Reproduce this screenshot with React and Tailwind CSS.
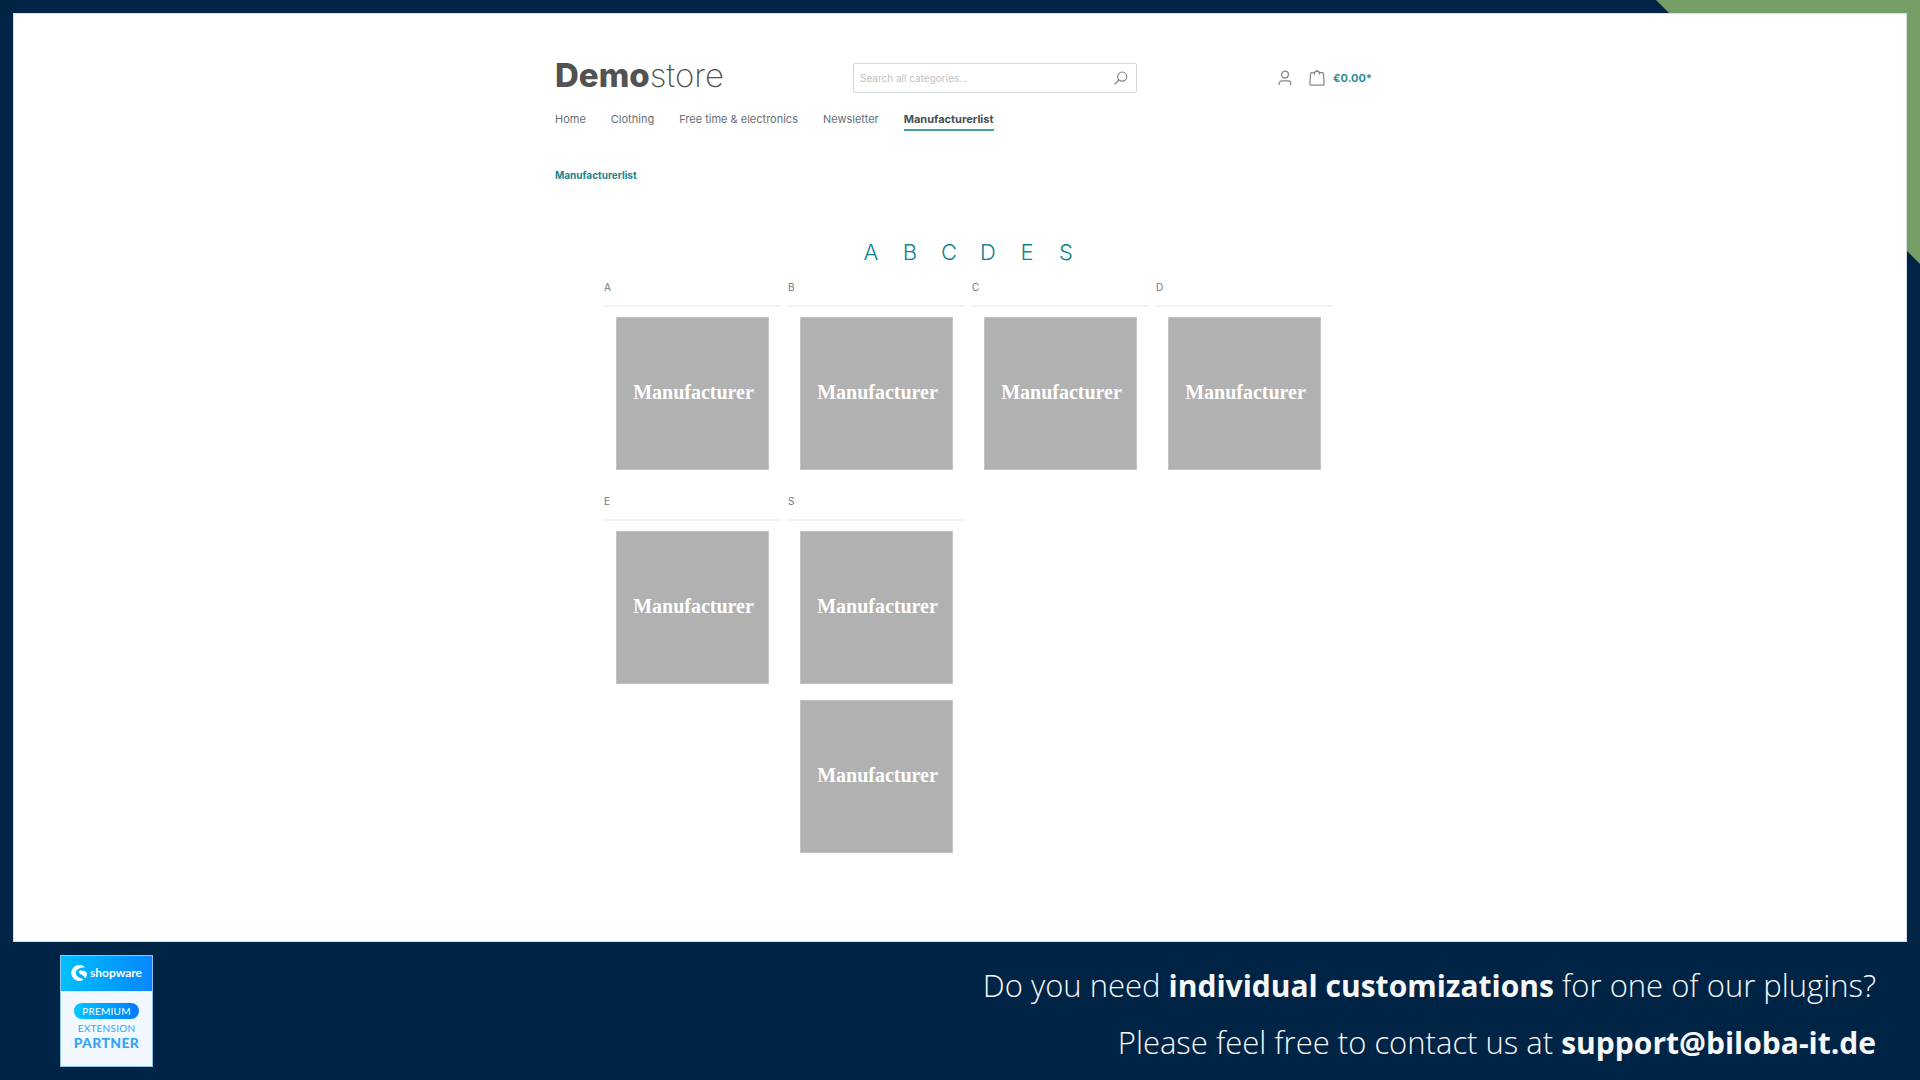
const navItems = ["Home", "Clothing", "Free time & electronics", "Newsletter", "Manufacturerlist"];

const groups = [
  { letter: "A", count: 1 },
  { letter: "B", count: 1 },
  { letter: "C", count: 1 },
  { letter: "D", count: 1 },
  { letter: "E", count: 1 },
  { letter: "S", count: 2 },
];

function SearchIcon() {
  return (
    <svg viewBox="0 0 14 14" className="size-[14px]" fill="none" stroke="#848484" strokeWidth="1.2" strokeLinecap="round" aria-hidden="true">
      <circle cx="8.2" cy="5.6" r="4.6" />
      <path d="M4.9 9 1 13" />
    </svg>
  );
}

function UserIcon() {
  return (
    <svg viewBox="0 0 14 16" className="h-4 w-[14px]" fill="none" stroke="#8a8a8a" strokeWidth="1.3" strokeLinecap="round" aria-hidden="true">
      <circle cx="7" cy="4.6" r="3.4" />
      <path d="M1.2 14.6v-1.1a2.7 2.7 0 0 1 2.7-2.7h6.2a2.7 2.7 0 0 1 2.7 2.7v1.1" />
    </svg>
  );
}

function BagIcon() {
  return (
    <svg viewBox="0 0 16 16" className="size-4" fill="none" stroke="#8a8a8a" strokeWidth="1.3" strokeLinecap="round" strokeLinejoin="round" aria-hidden="true">
      <path d="M5.4 2.6H2.6a1 1 0 0 0-1 .9L.9 13.800a1.300 1.300 0 0 0 1.300 1.400h11.600a1.300 1.300 0 0 0 1.300-1.400l-.7-10.300a1 1 0 0 0-1-.9h-2.800" />
      <path d="M5.400 4.200V3a2.400 2.200 0 0 1 4.200-1.300" />
      <path d="M6.400 1.700a2.600 2.200 0 0 1 4.200 1.300v1.200" />
    </svg>
  );
}

function Header() {
  return (
    <header>
      <div className="grid grid-cols-[298px_284px_1fr] items-center">
        <a href="#" className="-mt-1.5 text-[33px] leading-[30px] text-[#525252]">
          <span className="font-extrabold">Demo</span>
          <span className="font-extralight">store</span>
        </a>
        <form className="flex h-[30px] items-center rounded-xs border border-[#d3d7da] pr-2 pl-1.5">
          <input
            type="search"
            aria-label="Search all categories"
            placeholder="Search all categories..."
            className="min-w-0 flex-1 text-[10px] text-[#4a545b] outline-none placeholder:text-[#bfc1c3]"
          />
          <button type="button" aria-label="Search">
            <SearchIcon />
          </button>
        </form>
        <div className="flex items-center justify-end gap-[17px] pr-px">
          <button type="button" aria-label="Your account">
            <UserIcon />
          </button>
          <button type="button" className="flex items-center gap-2 text-[11px] leading-4 font-bold text-[#2b8f9b]">
            <BagIcon />
            <span>€0.00*</span>
          </button>
        </div>
      </div>
      <nav className="mt-[18px] flex gap-[25px] text-[11px] leading-4">
        {navItems.map((item) =>
          item === "Manufacturerlist" ? (
            <a key={item} href="#" aria-current="page" className="border-b-2 border-[#3e9fac] pb-0.5 font-bold text-[#4a4f54]">
              {item}
            </a>
          ) : (
            <a key={item} href="#" className="text-[#686e74]">
              {item}
            </a>
          ),
        )}
      </nav>
    </header>
  );
}

function ManufacturerGroup({ letter, count }) {
  return (
    <section id={letter}>
      <h2 className="border-b-2 border-[#f3f3f3] pb-2 text-[10px] leading-5 text-[#70767b]">{letter}</h2>
      <div className="mt-2.5 grid gap-4 px-3">
        {Array.from({ length: count }, (_, i) => (
          <a
            key={i}
            href="#"
            className="flex aspect-square items-center justify-center border border-[#c4c4c4] bg-[#b1b1b1] pb-1 pl-0.5 font-['Liberation_Serif',serif] text-[20px] leading-6 font-bold text-white"
          >
            Manufacturer
          </a>
        ))}
      </div>
    </section>
  );
}

function PartnerBadge() {
  return (
    <div className="flex h-28 w-[93px] flex-col border border-[#8fc4ea] bg-[#f2f8ff] text-center font-['Lato',sans-serif]">
      <div className="flex h-[35px] items-center justify-center gap-[3px] bg-linear-to-r from-[#00bfff] to-[#0d86ff] pb-0.5 text-white">
        <svg viewBox="0 0 16 16" className="size-4" fill="white" aria-hidden="true">
          <path d="M13.300 1.700A8 8 0 1 0 12 15c.4-.2.4-.6 0-.8C9.500 13 5.200 12.200 4.800 8.300 4.500 4.600 8.500 2.500 13.200 2.500c.5 0 .5-.5.1-.8z" />
          <path d="M8.400 5.800c2.500-1 6.800.8 7.500 2.200.3 1.800-.3 3.300-1 4.600-.3.500-.8.500-1.100.1C12.300 9.500 8.300 9.600 7.800 7.300c-.1-.7.100-1.200.6-1.500z" />
        </svg>
        <span className="text-[12px] leading-4 font-bold">shopware</span>
      </div>
      <div className="mt-3 flex flex-col items-center">
        <span className="rounded-full bg-linear-to-r from-[#00c8ff] to-[#0a78ff] px-2 text-[10px] leading-4 tracking-wide text-white">PREMIUM</span>
        <span className="text-[10px] leading-[18px] tracking-wide text-[#35a4f5]">EXTENSION</span>
        <span className="text-[14px] leading-3 font-black tracking-wide text-[#35a4f5]">PARTNER</span>
      </div>
    </div>
  );
}

export default function App() {
  return (
    <div className="relative isolate flex min-h-screen flex-col bg-[#002446] font-['Inter',sans-serif]">
      <div className="absolute top-0 right-0 -z-10 size-[264px] bg-[#759e66] [clip-path:polygon(0_0,100%_0,100%_100%)]" />
      <main className="mx-[13px] mt-[13px] flex-1 border border-[#d5dde2] bg-white pt-[49px]">
        <div className="mx-auto max-w-[826px] pl-2">
          <Header />
          <a href="#" className="mt-9 block w-fit text-[10px] leading-4 font-bold text-[#22838f]">
            Manufacturerlist
          </a>
          <div className="mt-[53px] pr-10 pl-[49px]">
            <nav aria-label="Manufacturers by letter" className="flex justify-center text-[22px] leading-8 font-light text-[#0f8490]">
              {groups.map(({ letter }) => (
                <a key={letter} href={"#" + letter} className="w-[39px] text-center">
                  {letter}
                </a>
              ))}
            </nav>
            <div className="mt-[9px] grid grid-cols-4 gap-x-[7px] gap-y-[21px]">
              {groups.map((group) => (
                <ManufacturerGroup key={group.letter} {...group} />
              ))}
            </div>
          </div>
        </div>
      </main>
      <footer className="flex h-[138px] items-center justify-between pr-11 pl-[60px]">
        <PartnerBadge />
        <div className="pt-1.5 text-right font-['Open_Sans',sans-serif] text-[31px] leading-[57px] font-light text-[#f7f7f7]">
          <p>
            Do you need <strong className="text-[30px] font-bold">individual customizations</strong> for one of our plugins?
          </p>
          <p>
            Please feel free to contact us at{" "}
            <a href="mailto:support@biloba-it.de" className="text-[30px] font-bold">
              support@biloba-it.de
            </a>
          </p>
        </div>
      </footer>
    </div>
  );
}
